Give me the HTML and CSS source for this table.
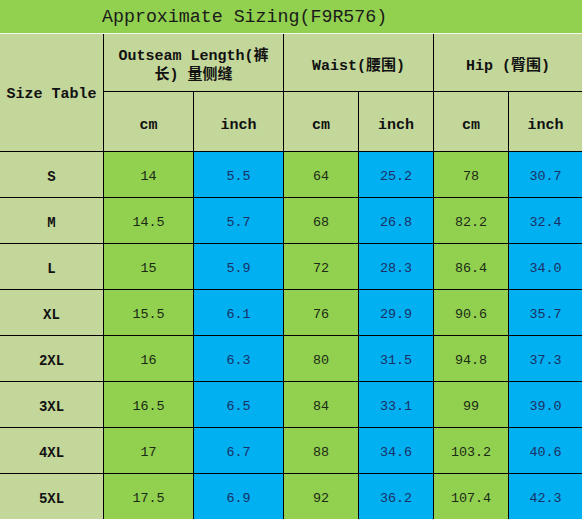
FILE: index.html
```html
<!DOCTYPE html>
<html>
<head>
<meta charset="utf-8">
<link rel="stylesheet" href="styles.css">
</head>
<body>
<div class="title">Approximate Sizing(F9R576)</div>
<div class="grid">
  <div class="cell head corner">Size Table</div>
  <div class="cell head span2 wrap">Outseam Length(裤<br>长) 量侧缝</div>
  <div class="cell head span2">Waist(腰围)</div>
  <div class="cell head span2">Hip (臀围)</div>
  <div class="cell head sub">cm</div>
  <div class="cell head sub">inch</div>
  <div class="cell head sub">cm</div>
  <div class="cell head sub">inch</div>
  <div class="cell head sub">cm</div>
  <div class="cell head sub">inch</div>

  <div class="cell size">S</div><div class="cell g">14</div><div class="cell b">5.5</div><div class="cell g">64</div><div class="cell b">25.2</div><div class="cell g">78</div><div class="cell b">30.7</div>
  <div class="cell size">M</div><div class="cell g">14.5</div><div class="cell b">5.7</div><div class="cell g">68</div><div class="cell b">26.8</div><div class="cell g">82.2</div><div class="cell b">32.4</div>
  <div class="cell size">L</div><div class="cell g">15</div><div class="cell b">5.9</div><div class="cell g">72</div><div class="cell b">28.3</div><div class="cell g">86.4</div><div class="cell b">34.0</div>
  <div class="cell size">XL</div><div class="cell g">15.5</div><div class="cell b">6.1</div><div class="cell g">76</div><div class="cell b">29.9</div><div class="cell g">90.6</div><div class="cell b">35.7</div>
  <div class="cell size">2XL</div><div class="cell g">16</div><div class="cell b">6.3</div><div class="cell g">80</div><div class="cell b">31.5</div><div class="cell g">94.8</div><div class="cell b">37.3</div>
  <div class="cell size">3XL</div><div class="cell g">16.5</div><div class="cell b">6.5</div><div class="cell g">84</div><div class="cell b">33.1</div><div class="cell g">99</div><div class="cell b">39.0</div>
  <div class="cell size">4XL</div><div class="cell g">17</div><div class="cell b">6.7</div><div class="cell g">88</div><div class="cell b">34.6</div><div class="cell g">103.2</div><div class="cell b">40.6</div>
  <div class="cell size">5XL</div><div class="cell g">17.5</div><div class="cell b">6.9</div><div class="cell g">92</div><div class="cell b">36.2</div><div class="cell g">107.4</div><div class="cell b">42.3</div>
</div>
</body>
</html>
```

FILE: styles.css
```css
html, body {
  margin: 0;
  padding: 0;
  width: 582px;
  height: 519px;
  overflow: hidden;
  background: #ffffff;
  font-family: "Liberation Mono", "Noto Sans CJK SC", monospace;
  color: #111;
}

.title {
  box-sizing: border-box;
  height: 34px;
  border-bottom: 1px solid #f2f7ea;
  background: #92d050;
  padding-left: 102px;
  padding-top: 2px;
  font-size: 18.3px;
  line-height: 31px;
  color: #1a1a1a;
}

.grid {
  display: grid;
  grid-template-columns: 103px 89px 89px 74px 74px 74px 73px;
  grid-template-rows: 57px 59px repeat(8, 45px);
  gap: 1px;
  background: #000;
}

.cell {
  display: flex;
  align-items: center;
  justify-content: center;
  text-align: center;
  font-size: 13.4px;
  padding-top: 4px;
  box-sizing: border-box;
}

.head {
  background: #c4d79b;
  font-weight: bold;
  font-size: 15px;
  color: #111;
  padding-top: 2px;
}

.sub {
  padding-top: 8px;
}

.corner {
  grid-row: span 2;
  padding-top: 4px;
}

.span2 {
  grid-column: span 2;
}

.wrap {
  line-height: 19px;
  padding-top: 6px;
}

.size {
  background: #c4d79b;
  font-weight: bold;
  font-size: 14px;
  color: #111;
}

.g {
  background: #92d050;
  color: #1a2a14;
}

.b {
  background: #00b0f0;
  color: #1c2f66;
}
```
